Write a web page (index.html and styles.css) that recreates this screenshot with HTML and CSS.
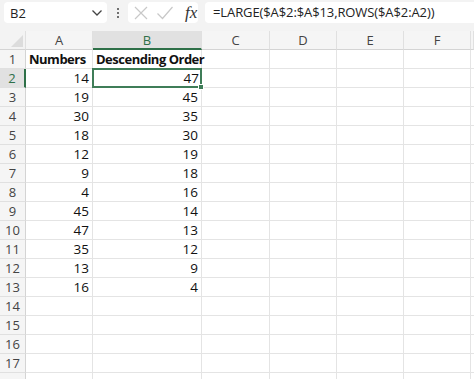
FILE: index.html
```html
<!DOCTYPE html>
<html lang="en">
  <head>
    <meta charset="UTF-8" />
    <title>LARGE descending order</title>
    <link rel="stylesheet" href="styles.css">
  </head>
  <body>
    <div class="formula-bar">
      <div class="name-box">
        <span>B2</span>
        <svg width="12" height="8" viewBox="0 0 12 8"><path d="M1.5 1.5 L6 6 L10.5 1.5" fill="none" stroke="#444" stroke-width="1.3"/></svg>
      </div>
      <div class="dots"><i></i><i></i><i></i></div>
      <div class="fn-box">
        <svg width="16" height="16" viewBox="0 0 16 16"><path d="M2 2 L14 14 M14 2 L2 14" stroke="#c8c8c8" stroke-width="1.2"/></svg>
        <svg width="18" height="16" viewBox="0 0 18 16"><path d="M1.5 8.5 L6.5 13.5 L16.5 2" fill="none" stroke="#c8c8c8" stroke-width="1.2"/></svg>
        <span class="fx">fx</span>
      </div>
      <div class="formula">=LARGE($A$2:$A$13,ROWS($A$2:A2))</div>
    </div>

    <div class="sheet">
      <div class="corner"><div class="tri"></div></div>
      <div class="col-head">A</div>
      <div class="col-head active">B</div>
      <div class="col-head">C</div>
      <div class="col-head">D</div>
      <div class="col-head">E</div>
      <div class="col-head">F</div>
      <div class="col-head"></div>
    </div>
    <div class="sheet" id="rows"></div>

    <script>
      const a = [14, 19, 30, 18, 12, 9, 4, 45, 47, 35, 13, 16];
      const b = [47, 45, 35, 30, 19, 18, 16, 14, 13, 12, 9, 4];
      const rows = document.getElementById('rows');
      let html = '';
      for (let r = 1; r <= 18; r++) {
        html += `<div class="row-head${r === 2 ? ' active' : ''}">${r < 18 ? r : ''}</div>`;
        let va = '', vb = '', cls = 'num';
        if (r === 1) { va = 'Numbers'; vb = 'Descending Order'; cls = 'bold'; }
        else if (r <= 13) { va = a[r - 2]; vb = b[r - 2]; }
        html += `<div class="cell ${cls}">${va}</div>`;
        html += `<div class="cell ${cls}${r === 2 ? ' selected' : ''}">${vb}</div>`;
        for (let c = 0; c < 5; c++) html += '<div class="cell"></div>';
      }
      rows.innerHTML = html;
    </script>
  </body>
</html>
```

FILE: styles.css
```css
body {
  margin: 0;
  background: #fff;
  font-family: "Open Sans", "Noto Sans", sans-serif;
  overflow: hidden;
}

.formula-bar {
  height: 31px;
  background: #f3f3f3;
  display: flex;
  align-items: flex-start;
  padding: 2px 0 0 4px;
  box-sizing: border-box;
}

.name-box {
  width: 103px;
  height: 21px;
  background: #fff;
  border-radius: 4px;
  display: flex;
  align-items: center;
  justify-content: space-between;
  padding: 0 4px 0 6px;
  box-sizing: border-box;
  font-size: 13px;
  color: #222;
}

.dots {
  width: 21px;
  height: 21px;
  display: flex;
  flex-direction: column;
  align-items: center;
  justify-content: center;
  gap: 2px;
}

.dots i {
  width: 2px;
  height: 2px;
  background: #444;
  border-radius: 1px;
}

.fn-box {
  width: 70px;
  height: 21px;
  background: #fff;
  border-radius: 4px;
  display: flex;
  align-items: center;
  padding: 0 0 0 5px;
  box-sizing: border-box;
  gap: 7px;
}

.fx {
  font-family: "Liberation Serif", serif;
  font-style: italic;
  font-size: 17px;
  color: #333;
  margin-left: 4px;
  line-height: 1;
}

.formula {
  flex: 1;
  height: 21px;
  margin-left: 7px;
  background: #fff;
  border-radius: 4px 0 0 4px;
  font-size: 13px;
  line-height: 21px;
  padding-left: 8px;
  color: #222;
  letter-spacing: -0.1px;
}

.sheet {
  display: grid;
  grid-template-columns: 26px 67px 109px 68px 67px 67px 67px 3px;
  grid-auto-rows: 19px;
}

.corner {
  background: #f3f3f3;
  border-right: 1px solid #e0e0e0;
  border-bottom: 1px solid #d4d4d4;
  box-sizing: border-box;
  position: relative;
}

.tri {
  position: absolute;
  right: 2px;
  bottom: 2px;
  width: 0;
  height: 0;
  border-left: 12px solid transparent;
  border-bottom: 12px solid #dcdcdc;
}

.col-head {
  background: #f5f5f5;
  border-right: 1px solid #e0e0e0;
  border-bottom: 1px solid #d4d4d4;
  box-sizing: border-box;
  text-align: center;
  font-size: 13px;
  line-height: 19px;
  color: #444;
}

.col-head.active {
  background: #e1e1e1;
  color: #2e7048;
  border-bottom: 2px solid #2e7048;
}

.row-head {
  background: #f5f5f5;
  border-bottom: 1px solid #e0e0e0;
  border-right: 1px solid #d4d4d4;
  box-sizing: border-box;
  text-align: center;
  font-size: 13px;
  line-height: 19px;
  color: #444;
}

.row-head.active {
  background: #e1e1e1;
  color: #2e7048;
  border-right: 2px solid #2e7048;
}

.cell {
  border-right: 1px solid #e4e4e4;
  border-bottom: 1px solid #e4e4e4;
  box-sizing: border-box;
  font-size: 13.5px;
  line-height: 19px;
  color: #111;
  padding: 0 3px;
  white-space: nowrap;
}

.cell.num {
  text-align: right;
}

.cell.bold {
  font-weight: bold;
  font-size: 13px;
  letter-spacing: -0.5px;
}

.cell.selected {
  border: 2px solid #3f7d58;
  margin: -1px 0 0 -1px;
  padding-right: 1px;
  line-height: 16px;
  position: relative;
}

.cell.selected::after {
  content: "";
  position: absolute;
  right: -4px;
  bottom: -4px;
  width: 4px;
  height: 4px;
  background: #3f7d58;
  border: 1px solid #fff;
}
```
